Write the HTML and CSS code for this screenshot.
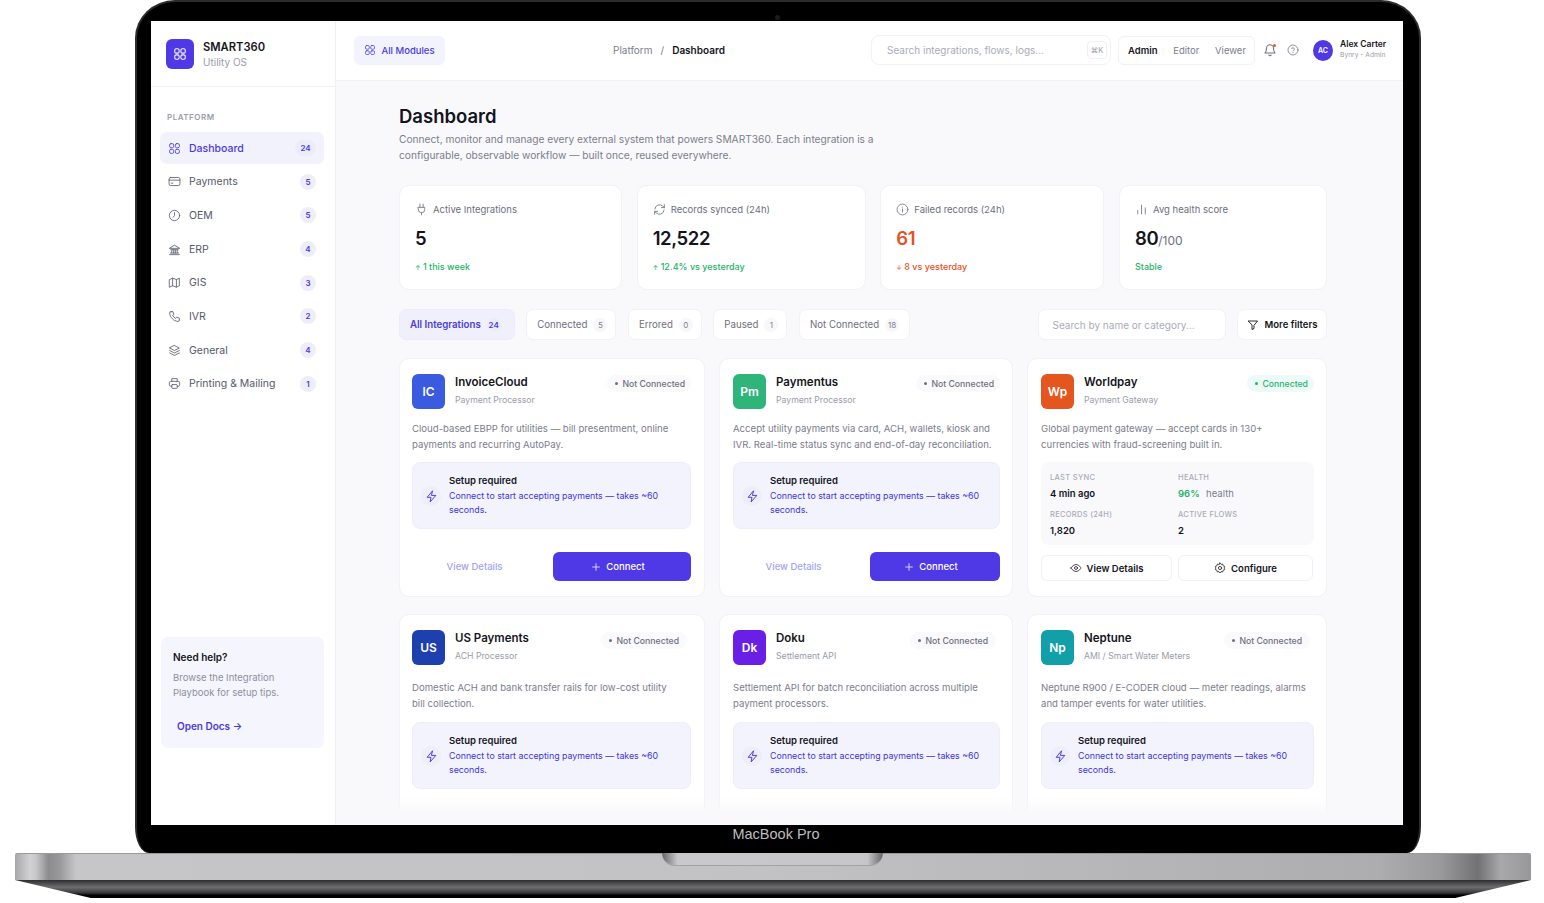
FILE: index.html
```html
<!DOCTYPE html>
<html lang="en">
<head>
    <meta charset="UTF-8">
    <title>SMART360 Dashboard</title>
    <link rel="stylesheet" href="styles.css">
</head>
<body>
    <svg class="sprite" xmlns="http://www.w3.org/2000/svg">
        <symbol id="i-grid" viewBox="0 0 24 24"><rect x="3" y="3" width="7.5" height="7.5" rx="2.5"/><rect x="13.5" y="3" width="7.5" height="7.5" rx="2.5"/><rect x="3" y="13.5" width="7.5" height="7.5" rx="2.5"/><rect x="13.5" y="13.5" width="7.5" height="7.5" rx="2.5"/></symbol>
        <symbol id="i-card" viewBox="0 0 24 24"><rect x="2" y="4.5" width="20" height="15" rx="3"/><path d="M2 9.5h20M6 15h3"/></symbol>
        <symbol id="i-clock" viewBox="0 0 24 24"><circle cx="12" cy="12" r="9.5"/><path d="M12 6.5V12l-2.5 3"/></symbol>
        <symbol id="i-bank" viewBox="0 0 24 24"><path d="M3 9.5 12 4l9 5.5zM5 12.5h14M7 12.5v6M10.5 12.5v6M13.5 12.5v6M17 12.5v6M4.5 18.5h15M3 21.5h18"/></symbol>
        <symbol id="i-map" viewBox="0 0 24 24"><path d="M3 6.5 8.5 4l7 2.5L21 4v14l-5.5 2.5L8.5 18 3 20.5zM8.5 4v14M15.5 6.5v14"/></symbol>
        <symbol id="i-phone" viewBox="0 0 24 24"><path d="M6 3h3l2 5-2.5 1.8a12 12 0 0 0 5.7 5.7L16 13l5 2v3.5a2.5 2.5 0 0 1-2.7 2.5C10.5 20.5 3.5 13.5 3 5.7A2.5 2.5 0 0 1 6 3z"/></symbol>
        <symbol id="i-layers" viewBox="0 0 24 24"><path d="m12 3 9 4.5-9 4.5-9-4.5zM3 12l9 4.5 9-4.5M3 16.5 12 21l9-4.5"/></symbol>
        <symbol id="i-print" viewBox="0 0 24 24"><path d="M7 8V3h10v5M7 17H5a2.5 2.5 0 0 1-2.5-2.5v-4A2.5 2.5 0 0 1 5 8h14a2.5 2.5 0 0 1 2.5 2.5v4A2.5 2.5 0 0 1 19 17h-2"/><rect x="7" y="14" width="10" height="7" rx="1"/></symbol>
        <symbol id="i-plug" viewBox="0 0 24 24"><path d="M9 2v6M15 2v6M6 8h12v4a6 6 0 0 1-12 0zM12 18v4"/></symbol>
        <symbol id="i-sync" viewBox="0 0 24 24"><path d="M3.5 11A8.6 8.6 0 0 1 18.3 6L21 8.5M21 3v5.5h-5.5M20.5 13A8.6 8.6 0 0 1 5.7 18L3 15.5M3 21v-5.5h5.5"/></symbol>
        <symbol id="i-info" viewBox="0 0 24 24"><circle cx="12" cy="12" r="10"/><path d="M12 11v6M12 7.5v.1"/></symbol>
        <symbol id="i-bars" viewBox="0 0 24 24"><path d="M5 20v-6M12 20V4M19 20V9"/></symbol>
        <symbol id="i-funnel" viewBox="0 0 24 24"><path d="M3 4h18l-7 8.5V19l-4 2v-8.5z"/></symbol>
        <symbol id="i-bell" viewBox="0 0 24 24"><path d="M12 3a6 6 0 0 0-6 6c0 6-2.5 8-2.5 8h17S18 15 18 9a6 6 0 0 0-6-6zM10 20.5a2.2 2.2 0 0 0 4 0"/></symbol>
        <symbol id="i-help" viewBox="0 0 24 24"><circle cx="12" cy="12" r="10"/><path d="M9.2 9.3a2.9 2.9 0 0 1 5.6.9c0 1.9-2.8 2.5-2.8 4M12 17.5v.1"/></symbol>
        <symbol id="i-zap" viewBox="0 0 24 24"><path d="M13.5 2 4 13.5h7L9.5 22 20 10h-7.5z"/></symbol>
        <symbol id="i-eye" viewBox="0 0 24 24"><path d="M2 12s3.6-7 10-7 10 7 10 7-3.6 7-10 7-10-7-10-7z"/><circle cx="12" cy="12" r="3"/></symbol>
        <symbol id="i-gear" viewBox="0 0 24 24"><circle cx="12" cy="12" r="3.2"/><path d="m12 2 2 2.8 3.4-.6.9 3.3 3.2 1.3-1.2 3.2 1.2 3.2-3.2 1.3-.9 3.3-3.4-.6L12 22l-2-2.8-3.4.6-.9-3.3-3.2-1.3L3.7 12 2.5 8.8l3.2-1.3.9-3.3 3.4.6z"/></symbol>
        <symbol id="i-plus" viewBox="0 0 24 24"><path d="M12 4v16M4 12h16"/></symbol>
    </svg>

    <div class="laptop">
        <div class="lid">
            <div class="camera"></div>
            <div class="screen">
                <aside class="sidebar">
                    <div class="brand">
                        <div class="brand-logo"><svg class="ico"><use href="#i-grid"/></svg></div>
                        <div>
                            <div class="brand-name">SMART360</div>
                            <div class="brand-sub">Utility OS</div>
                        </div>
                    </div>
                    <div class="nav-title">PLATFORM</div>
                    <nav class="nav">
                        <a class="nav-item active"><svg class="ico"><use href="#i-grid"/></svg><span>Dashboard</span><b class="count wide">24</b></a>
                        <a class="nav-item"><svg class="ico"><use href="#i-card"/></svg><span>Payments</span><b class="count">5</b></a>
                        <a class="nav-item"><svg class="ico"><use href="#i-clock"/></svg><span>OEM</span><b class="count">5</b></a>
                        <a class="nav-item"><svg class="ico"><use href="#i-bank"/></svg><span>ERP</span><b class="count">4</b></a>
                        <a class="nav-item"><svg class="ico"><use href="#i-map"/></svg><span>GIS</span><b class="count">3</b></a>
                        <a class="nav-item"><svg class="ico"><use href="#i-phone"/></svg><span>IVR</span><b class="count">2</b></a>
                        <a class="nav-item"><svg class="ico"><use href="#i-layers"/></svg><span>General</span><b class="count">4</b></a>
                        <a class="nav-item"><svg class="ico"><use href="#i-print"/></svg><span>Printing &amp; Mailing</span><b class="count">1</b></a>
                    </nav>
                    <div class="help">
                        <div class="help-title">Need help?</div>
                        <p>Browse the Integration Playbook for setup tips.</p>
                        <a class="help-link">Open Docs →</a>
                    </div>
                </aside>

                <div class="main">
                    <header class="topbar">
                        <button class="modules"><svg class="ico"><use href="#i-grid"/></svg>All Modules</button>
                        <div class="crumbs"><span>Platform</span><span>/</span><b>Dashboard</b></div>
                        <div class="top-search"><span>Search integrations, flows, logs...</span><kbd>⌘K</kbd></div>
                        <div class="roles"><b>Admin</b><span>Editor</span><span>Viewer</span></div>
                        <div class="bell"><svg class="ico"><use href="#i-bell"/></svg><i></i></div>
                        <svg class="ico top-ico"><use href="#i-help"/></svg>
                        <div class="avatar">AC</div>
                        <div class="user">
                            <b>Alex Carter</b>
                            <span>Bynry - Admin</span>
                        </div>
                    </header>

                    <div class="content">
                        <h1>Dashboard</h1>
                        <p class="intro">Connect, monitor and manage every external system that powers SMART360. Each integration is a configurable, observable workflow — built once, reused everywhere.</p>

                        <div class="stats">
                            <div class="stat">
                                <div class="stat-label"><svg class="ico"><use href="#i-plug"/></svg>Active Integrations</div>
                                <div class="stat-value">5</div>
                                <div class="stat-note good"><i>↑</i> 1 this week</div>
                            </div>
                            <div class="stat">
                                <div class="stat-label"><svg class="ico"><use href="#i-sync"/></svg>Records synced (24h)</div>
                                <div class="stat-value">12,522</div>
                                <div class="stat-note good"><i>↑</i> 12.4% vs yesterday</div>
                            </div>
                            <div class="stat">
                                <div class="stat-label"><svg class="ico"><use href="#i-info"/></svg>Failed records (24h)</div>
                                <div class="stat-value bad">61</div>
                                <div class="stat-note bad"><i>↓</i> 8 vs yesterday</div>
                            </div>
                            <div class="stat">
                                <div class="stat-label"><svg class="ico"><use href="#i-bars"/></svg>Avg health score</div>
                                <div class="stat-value">80<small>/100</small></div>
                                <div class="stat-note good">Stable</div>
                            </div>
                        </div>

                        <div class="filters">
                            <a class="tab active two">All Integrations <b>24</b></a>
                            <a class="tab">Connected <b>5</b></a>
                            <a class="tab">Errored <b>0</b></a>
                            <a class="tab">Paused <b>1</b></a>
                            <a class="tab two">Not Connected <b>18</b></a>
                            <div class="filter-search">Search by name or category...</div>
                            <button class="more"><svg class="ico"><use href="#i-funnel"/></svg>More filters</button>
                        </div>

                        <div class="cards">
                            <div class="card">
                                <div class="card-head">
                                    <div class="logo blue">IC</div>
                                    <div class="card-title"><b>InvoiceCloud</b><span>Payment Processor</span></div>
                                    <div class="status">Not Connected</div>
                                </div>
                                <p class="desc">Cloud-based EBPP for utilities — bill presentment, online<br>payments and recurring AutoPay.</p>
                                <div class="setup">
                                    <div class="zap"><svg class="ico"><use href="#i-zap"/></svg></div>
                                    <div><b>Setup required</b><span>Connect to start accepting payments — takes ~60 seconds.</span></div>
                                </div>
                                <div class="actions">
                                    <a class="details">View Details</a>
                                    <button class="connect"><svg class="ico"><use href="#i-plus"/></svg>Connect</button>
                                </div>
                            </div>

                            <div class="card">
                                <div class="card-head">
                                    <div class="logo green">Pm</div>
                                    <div class="card-title"><b>Paymentus</b><span>Payment Processor</span></div>
                                    <div class="status">Not Connected</div>
                                </div>
                                <p class="desc">Accept utility payments via card, ACH, wallets, kiosk and<br>IVR. Real-time status sync and end-of-day reconciliation.</p>
                                <div class="setup">
                                    <div class="zap"><svg class="ico"><use href="#i-zap"/></svg></div>
                                    <div><b>Setup required</b><span>Connect to start accepting payments — takes ~60 seconds.</span></div>
                                </div>
                                <div class="actions narrow">
                                    <a class="details">View Details</a>
                                    <button class="connect"><svg class="ico"><use href="#i-plus"/></svg>Connect</button>
                                </div>
                            </div>

                            <div class="card">
                                <div class="card-head">
                                    <div class="logo orange">Wp</div>
                                    <div class="card-title"><b>Worldpay</b><span>Payment Gateway</span></div>
                                    <div class="status on">Connected</div>
                                </div>
                                <p class="desc">Global payment gateway — accept cards in 130+<br>currencies with fraud-screening built in.</p>
                                <div class="metrics">
                                    <div><label>LAST SYNC</label><b>4 min ago</b></div>
                                    <div><label>HEALTH</label><b><em>96%</em> <span>health</span></b></div>
                                    <div><label>RECORDS (24H)</label><b>1,820</b></div>
                                    <div><label>ACTIVE FLOWS</label><b>2</b></div>
                                </div>
                                <div class="actions split">
                                    <button class="ghost"><svg class="ico"><use href="#i-eye"/></svg>View Details</button>
                                    <button class="ghost"><svg class="ico"><use href="#i-gear"/></svg>Configure</button>
                                </div>
                            </div>

                            <div class="card lower">
                                <div class="card-head">
                                    <div class="logo navy">US</div>
                                    <div class="card-title"><b>US Payments</b><span>ACH Processor</span></div>
                                    <div class="status">Not Connected</div>
                                </div>
                                <p class="desc">Domestic ACH and bank transfer rails for low-cost utility<br>bill collection.</p>
                                <div class="setup">
                                    <div class="zap"><svg class="ico"><use href="#i-zap"/></svg></div>
                                    <div><b>Setup required</b><span>Connect to start accepting payments — takes ~60 seconds.</span></div>
                                </div>
                            </div>

                            <div class="card lower">
                                <div class="card-head">
                                    <div class="logo purple">Dk</div>
                                    <div class="card-title"><b>Doku</b><span>Settlement API</span></div>
                                    <div class="status">Not Connected</div>
                                </div>
                                <p class="desc">Settlement API for batch reconciliation across multiple<br>payment processors.</p>
                                <div class="setup">
                                    <div class="zap"><svg class="ico"><use href="#i-zap"/></svg></div>
                                    <div><b>Setup required</b><span>Connect to start accepting payments — takes ~60 seconds.</span></div>
                                </div>
                            </div>

                            <div class="card lower">
                                <div class="card-head">
                                    <div class="logo teal">Np</div>
                                    <div class="card-title"><b>Neptune</b><span>AMI / Smart Water Meters</span></div>
                                    <div class="status">Not Connected</div>
                                </div>
                                <p class="desc">Neptune R900 / E-CODER cloud — meter readings, alarms<br>and tamper events for water utilities.</p>
                                <div class="setup">
                                    <div class="zap"><svg class="ico"><use href="#i-zap"/></svg></div>
                                    <div><b>Setup required</b><span>Connect to start accepting payments — takes ~60 seconds.</span></div>
                                </div>
                            </div>
                        </div>
                    </div>
                    <div class="fade"></div>
                </div>
            </div>
            <div class="lid-label">MacBook Pro</div>
        </div>
        <div class="base">
            <div class="notch"></div>
            <div class="base-top"></div>
            <div class="base-under"></div>
        </div>
    </div>
</body>
</html>
```

FILE: styles.css
```css
* {
    box-sizing: border-box;
}
body {
    margin: 0;
    background: #fff;
    font-family: Inter, "Open Sans", sans-serif;
    color: #14151c;
    overflow: hidden;
}
.sprite {
    display: none;
}
.ico {
    width: 14px;
    height: 14px;
    flex: none;
    fill: none;
    stroke: currentColor;
    stroke-width: 1.8;
    stroke-linecap: round;
    stroke-linejoin: round;
}
p {
    margin: 0;
}
button {
    font-family: inherit;
    border: none;
    padding: 0;
}

/* laptop frame */
.laptop {
    width: 1544px;
    height: 903px;
    display: flex;
    flex-direction: column;
    align-items: flex-start;
}
.lid {
    position: relative;
    width: 1286px;
    height: 853px;
    margin-left: 135px;
    padding: 19px 15px 0 14px;
    background: #000;
    border: 2px solid #2c2c2e;
    border-bottom: none;
    border-radius: 40px 40px 14px 14px / 38px 38px 26px 26px;
    flex: none;
}
.camera {
    position: absolute;
    left: 638px;
    top: 13px;
    width: 5px;
    height: 5px;
    border-radius: 50%;
    background: #1c1c20;
}
.screen {
    width: 1252px;
    height: 804px;
    display: flex;
    background: #fff;
    overflow: hidden;
}
.lid-label {
    text-align: center;
    padding-right: 3px;
    color: #bdbdbf;
    font-family: "Liberation Sans", sans-serif;
    font-size: 14.5px;
    line-height: 18px;
}
.base {
    position: relative;
    width: 1516px;
    height: 45px;
    margin-left: 15px;
    flex: none;
}
.base-top {
    height: 27px;
    background: linear-gradient(90deg, #a8a8aa 0, #d2d2d4 1%, #c6c6c8 1.4%, #8c8c8e 2.2%, #9a9a9c 3%, #c6c6c8 4%, #c2c2c4 50%, #adadaf 90%, #9a9a9c 94%, #727274 96.5%, #a8a8aa 98%, #98989a 100%);
    border-top: 1px solid #9b9b9d;
    border-radius: 2px 2px 0 0;
}
.base-under {
    height: 18px;
    background: linear-gradient(180deg, #2e2e30 0, #6e6e70 40%, #3a3a3c 70%, #000 85%);
    clip-path: polygon(0 0, 100% 0, 95% 100%, 5% 100%);
}
.notch {
    position: absolute;
    left: 647px;
    top: 0;
    width: 221px;
    height: 13px;
    background: linear-gradient(90deg, #666668 0, #c9c9cb 7%, #c6c6c8 93%, #666668 100%);
    border-bottom: 1px solid #a2a2a6;
    border-radius: 0 0 14px 14px;
}

/* sidebar */
.sidebar {
    width: 185px;
    flex: none;
    display: flex;
    flex-direction: column;
    border-right: 1px solid #f0f0f5;
    background: #fff;
    padding-bottom: 77px;
}
.brand {
    height: 66px;
    display: flex;
    align-items: center;
    gap: 9px;
    padding: 0 15px;
    border-bottom: 1px solid #f0f0f5;
}
.brand-logo {
    width: 28px;
    height: 30px;
    border-radius: 6px;
    background: #4f39e6;
    color: #fff;
    display: flex;
    align-items: center;
    justify-content: center;
}
.brand-name {
    margin-top: 2px;
    font-size: 11.2px;
    font-weight: 600;
    line-height: 16px;
}
.brand-sub {
    font-size: 10px;
    color: #9a9ca8;
    line-height: 15px;
}
.nav-title {
    font-size: 8px;
    font-weight: 600;
    letter-spacing: 0.5px;
    color: #9a9ca8;
    padding: 25px 16px 0;
    line-height: 10px;
}
.nav {
    display: flex;
    flex-direction: column;
    gap: 1.7px;
    padding: 10px 11px 0 9px;
}
.nav-item {
    height: 32px;
    display: flex;
    align-items: center;
    gap: 8px;
    padding: 0 8px;
    border-radius: 7px;
    font-size: 10.5px;
    color: #55586a;
}
.nav-item span {
    flex: 1;
}
.nav-item .ico {
    stroke-width: 1.5;
    width: 13px;
    height: 13px;
}
.nav-item.active {
    background: #f2f2fd;
    color: #4a3be0;
    font-weight: 500;
}
.count {
    min-width: 16px;
    height: 16px;
    border-radius: 8px;
    background: #eeeefb;
    color: #4a3be0;
    font-size: 8px;
    font-weight: 600;
    display: flex;
    align-items: center;
    justify-content: center;
}
.count.wide {
    min-width: 21px;
    background: #ecebfa;
}
.help {
    margin: auto 11px 0 10px;
    height: 111px;
    padding: 13px 12px;
    background: #f5f5fd;
    border-radius: 7px;
}
.help-title {
    font-size: 10px;
    font-weight: 600;
    line-height: 14px;
}
.help p {
    margin-top: 7px;
    font-size: 9.5px;
    line-height: 14.5px;
    color: #8d8f9d;
}
.help-link {
    display: block;
    margin: 20px 0 0 4px;
    font-size: 10px;
    font-weight: 600;
    color: #4a3be0;
}

/* top bar */
.main {
    position: relative;
    flex: 1;
    min-width: 0;
    background: #f9f9fc;
    display: flex;
    flex-direction: column;
}
.topbar {
    height: 60px;
    flex: none;
    display: flex;
    align-items: center;
    padding: 0 16px 1px 18px;
    background: #fff;
    border-bottom: 1px solid #f1f1f6;
}
.modules {
    width: 91px;
    height: 29px;
    display: flex;
    align-items: center;
    justify-content: center;
    gap: 5px;
    background: #f2f3fd;
    border-radius: 6px;
    color: #4a3be0;
    font-size: 9.5px;
    font-weight: 500;
}
.modules .ico {
    width: 12px;
    height: 12px;
    stroke-width: 1.5;
}
.crumbs {
    display: flex;
    gap: 8px;
    margin-left: 168px;
    width: 258px;
    font-size: 10px;
    color: #7b7d8c;
}
.crumbs b {
    color: #14151c;
    font-weight: 600;
}
.top-search {
    width: 240px;
    height: 30px;
    display: flex;
    align-items: center;
    justify-content: space-between;
    padding: 0 3px 0 15px;
    border: 1px solid #f1f1f6;
    border-radius: 8px;
    font-size: 10px;
    color: #a9abb8;
}
kbd {
    width: 20px;
    height: 18px;
    display: flex;
    align-items: center;
    justify-content: center;
    border: 1px solid #f0f0f5;
    border-radius: 4px;
    font-family: inherit;
    font-size: 7.5px;
    color: #9a9ca8;
}
.roles {
    width: 137px;
    height: 29px;
    margin-left: 7px;
    display: flex;
    align-items: center;
    justify-content: space-between;
    padding: 0 8px 0 9px;
    border: 1px solid #f1f1f6;
    border-radius: 6px;
    font-size: 9.5px;
    color: #7b7d8c;
}
.roles b {
    color: #14151c;
    font-weight: 600;
}
.bell {
    position: relative;
    margin-left: 8px;
    color: #6d6f7e;
    display: flex;
}
.bell i {
    position: absolute;
    top: 1px;
    right: 1px;
    width: 3px;
    height: 3px;
    border-radius: 50%;
    background: #e8562a;
}
.top-ico {
    margin-left: 10px;
    color: #6d6f7e;
    width: 12px;
    height: 12px;
    stroke-width: 1.5;
}
.avatar {
    width: 20px;
    height: 21px;
    margin-left: 14px;
    border-radius: 50%;
    background: #4f39e6;
    color: #fff;
    font-size: 7px;
    font-weight: 600;
    display: flex;
    align-items: center;
    justify-content: center;
}
.user {
    margin-left: 7px;
    display: flex;
    flex-direction: column;
    line-height: 11px;
}
.user b {
    font-size: 8.5px;
    font-weight: 600;
}
.user span {
    font-size: 6.7px;
    color: #9a9ca8;
}

/* page content */
.content {
    padding: 23px 76px 0 63px;
}
h1 {
    margin: 0;
    font-size: 18.5px;
    font-weight: 600;
    line-height: 24px;
}
.intro {
    width: 490px;
    margin-top: 3px;
    font-size: 10.2px;
    line-height: 16px;
    color: #7b7d8c;
}
.stats {
    display: grid;
    grid-template-columns: 223px 229px 224px 208px;
    justify-content: space-between;
    margin-top: 22px;
}
.stat {
    height: 105px;
    padding: 16px 15px;
    background: #fff;
    border: 1px solid #f1f1f6;
    border-radius: 10px;
}
.stat-label {
    display: flex;
    align-items: center;
    gap: 5px;
    height: 15px;
    font-size: 9.5px;
    color: #6d6f7e;
}
.stat-label .ico {
    width: 13px;
    height: 13px;
    stroke-width: 1.5;
}
.stat-value {
    height: 28px;
    margin-top: 7px;
    font-size: 18.5px;
    font-weight: 600;
    letter-spacing: -0.4px;
    line-height: 28px;
}
.stat-value small {
    font-size: 12px;
    font-weight: 400;
    letter-spacing: 0;
    color: #6d6f7e;
}
.stat-note {
    margin-top: 8px;
    font-size: 9px;
    font-weight: 500;
    line-height: 14px;
}
.stat-note i {
    font-size: 6.5px;
    font-style: normal;
}
.good {
    color: #1fb469;
}
.bad {
    color: #e8501f;
}
.filters {
    display: flex;
    gap: 11.5px;
    align-items: center;
    margin-top: 19px;
}
.tab {
    height: 31px;
    display: flex;
    align-items: center;
    gap: 6px;
    padding: 0 8px 0 10px;
    background: #fff;
    border: 1px solid #f1f1f6;
    border-radius: 7px;
    font-size: 9.7px;
    color: #6d6f7e;
}
.tab.two {
    padding-right: 10px;
}
.tab b {
    min-width: 14px;
    height: 14px;
    line-height: 14px;
    border-radius: 7px;
    text-align: center;
    background: #f7f7fa;
    font-size: 8px;
    font-weight: 400;
    color: #7b7d8c;
}
.tab.active {
    padding-right: 13px;
    background: #f0f0fc;
    border-color: #ebebfa;
    color: #4a3be0;
    font-weight: 600;
}
.tab.active b {
    background: #ecebfa;
    color: #4a3be0;
    font-weight: 600;
}
.filter-search {
    margin-left: auto;
    width: 188px;
    height: 31px;
    display: flex;
    align-items: center;
    padding: 0 14px;
    background: #fff;
    border: 1px solid #f1f1f6;
    border-radius: 7px;
    font-size: 10px;
    color: #a9abb8;
}
.more {
    width: 90px;
    height: 31px;
    display: flex;
    align-items: center;
    justify-content: center;
    gap: 6px;
    background: #fff;
    border: 1px solid #f1f1f6;
    border-radius: 7px;
    font-size: 9.5px;
    font-weight: 600;
    color: #14151c;
}
.more .ico {
    width: 12px;
    height: 12px;
}

/* integration cards */
.cards {
    display: grid;
    grid-template-columns: 306px 294px 300px;
    grid-auto-rows: 239px;
    gap: 17px 14px;
    margin-top: 18px;
}
.card {
    display: flex;
    flex-direction: column;
    padding: 15px 12px 15px 13px;
    background: #fff;
    border: 1px solid #f1f1f6;
    border-radius: 10px;
}
.card:nth-child(3n+1) {
    padding: 15px 13px 15px 12px;
}
.card-head {
    display: flex;
    align-items: flex-start;
    gap: 10px;
}
.logo {
    width: 33px;
    height: 35px;
    flex: none;
    border-radius: 6px;
    color: #fff;
    font-size: 12px;
    font-weight: 600;
    display: flex;
    align-items: center;
    justify-content: center;
}
.blue { background: #3a5be0; }
.green { background: #2fb57a; }
.orange { background: #e5561f; }
.navy { background: #1e3fae; }
.purple { background: #6a1fe6; }
.teal { background: #12a0a8; }
.card-title {
    flex: 1;
    display: flex;
    flex-direction: column;
}
.card-title b {
    font-size: 11.5px;
    font-weight: 600;
    line-height: 16px;
}
.card-title span {
    margin-top: 3px;
    font-size: 8.7px;
    line-height: 14px;
    color: #9a9ca8;
}
.status {
    height: 17px;
    padding: 0 6px 0 15px;
    margin-top: 1px;
    position: relative;
    display: flex;
    align-items: center;
    background: #fafafc;
    border-radius: 9px;
    font-size: 8.7px;
    font-weight: 500;
    color: #6d6f7e;
}
.status::before {
    content: "";
    position: absolute;
    left: 8px;
    top: 7px;
    width: 3px;
    height: 3px;
    border-radius: 50%;
    background: currentColor;
}
.status.on {
    background: #eefaf8;
    color: #1fb469;
}
.desc {
    margin-top: 12px;
    font-size: 9.6px;
    line-height: 16px;
    color: #7b7d8c;
    white-space: nowrap;
}
.setup {
    margin-top: 9px;
    height: 67px;
    display: flex;
    align-items: center;
    gap: 8px;
    padding: 0 11px 0 8px;
    background: #f3f3fd;
    border: 1px solid #eeeefa;
    border-radius: 8px;
    flex: none;
}
.lower .status {
    margin-right: 4px;
    margin-top: 2px;
    padding-right: 8px;
}
.lower .desc {
    margin-top: 15px;
}
.lower .setup {
    margin-top: 10px;
}
.zap {
    width: 20px;
    height: 20px;
    flex: none;
    margin-top: 1px;
    border-radius: 50%;
    background: #eeeef9;
    color: #4a3be0;
    display: flex;
    align-items: center;
    justify-content: center;
}
.zap .ico {
    width: 13px;
    height: 13px;
}
.setup b {
    display: block;
    font-size: 9.5px;
    font-weight: 600;
    line-height: 14px;
}
.setup span {
    display: block;
    margin-top: 1px;
    font-size: 8.8px;
    line-height: 14.5px;
    color: #3f35dc;
}
.actions {
    margin-top: auto;
    display: grid;
    grid-template-columns: 1fr 138px;
    align-items: center;
}
.actions.narrow {
    grid-template-columns: 1fr 130px;
}
.details {
    text-align: center;
    padding-right: 16px;
    font-size: 9.5px;
    font-weight: 500;
    color: #a3a3ef;
}
.connect {
    height: 29px;
    display: flex;
    align-items: center;
    justify-content: center;
    gap: 5px;
    padding-right: 8px;
    background: #4f39e6;
    border-radius: 6px;
    color: #fff;
    font-size: 9.5px;
    font-weight: 500;
}
.connect .ico {
    width: 10px;
    height: 10px;
}
.metrics {
    margin-top: 9px;
    height: 83px;
    display: grid;
    grid-template-columns: 128px 1fr;
    grid-auto-rows: 37px;
    padding: 11px 9px 0;
    background: #f9f9fc;
    border-radius: 8px;
    flex: none;
}
.metrics label {
    display: block;
    font-size: 7.5px;
    font-weight: 500;
    letter-spacing: 0.3px;
    line-height: 10px;
    color: #a9abb8;
}
.metrics b {
    display: block;
    margin-top: 4px;
    font-size: 9.5px;
    font-weight: 600;
    line-height: 13px;
}
.metrics em {
    font-style: normal;
    color: #1fb469;
}
.metrics b span {
    margin-left: 4px;
    font-weight: 400;
    color: #7b7d8c;
}
.actions.split {
    grid-template-columns: 131px 135px;
    gap: 6px;
}
.ghost {
    height: 26px;
    display: flex;
    align-items: center;
    justify-content: center;
    gap: 5px;
    background: #fff;
    border: 1px solid #f0f0f5;
    border-radius: 6px;
    font-size: 9.5px;
    font-weight: 600;
    color: #14151c;
}
.ghost .ico {
    width: 12px;
    height: 12px;
    stroke-width: 1.5;
}
.fade {
    position: absolute;
    left: 0;
    right: 0;
    bottom: 0;
    height: 28px;
    background: linear-gradient(180deg, rgba(249, 249, 252, 0), #f9f9fc 60%);
}
```
